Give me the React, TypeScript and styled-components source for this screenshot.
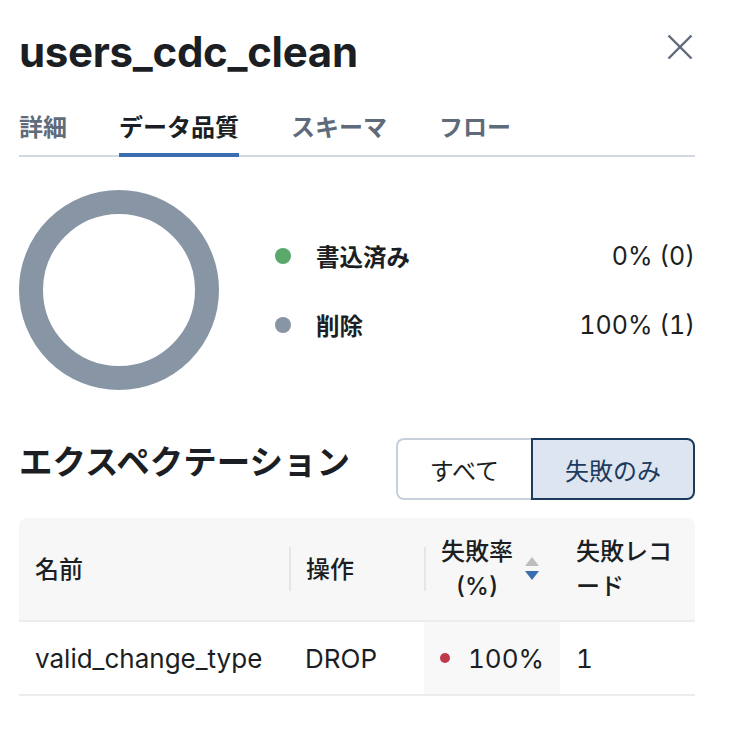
import React from "react";
import styled, { createGlobalStyle } from "styled-components";

const Global = createGlobalStyle`
  html, body { margin: 0; padding: 0; background: #ffffff; }
  body {
    font-family: Inter, "Noto Sans CJK JP", sans-serif;
    color: #1b1f24;
    font-variant-numeric: tabular-nums;
  }
  * { box-sizing: border-box; }
`;

const Panel = styled.div`
  width: 736px;
  padding: 24px 41px 40px 19px;
`;

const Header = styled.div`
  display: flex;
  justify-content: space-between;
  align-items: flex-start;
`;

const Title = styled.h1`
  margin: 0;
  font-size: 42px;
  line-height: 56px;
  font-weight: 700;
  letter-spacing: -0.3px;
`;

const CloseButton = styled.button`
  border: none;
  background: none;
  padding: 0;
  margin: 10px 2px 0 0;
  width: 26px;
  height: 26px;
  display: flex;
  color: #5f6b7a;
  cursor: pointer;
`;

const TabBar = styled.div`
  display: flex;
  gap: 52px;
  margin-top: 32px;
  border-bottom: 2px solid #d3d9e1;
`;

const Tab = styled.div<{ $active?: boolean }>`
  font-size: 24px;
  line-height: 32px;
  font-weight: 600;
  padding-bottom: 9px;
  margin-bottom: -2px;
  border-bottom: 4px solid ${(p) => (p.$active ? "#3a6eb0" : "transparent")};
  color: ${(p) => (p.$active ? "#1b1f24" : "#5f6b7a")};
`;

const ChartRow = styled.div`
  display: flex;
  align-items: center;
  margin-top: 33px;
`;

const Legend = styled.div`
  flex: 1;
  margin-left: 56px;
  display: flex;
  flex-direction: column;
  gap: 35px;
`;

const LegendRow = styled.div`
  display: flex;
  align-items: center;
  height: 34px;
`;

const Dot = styled.span<{ $color: string; $size: number }>`
  width: ${(p) => p.$size}px;
  height: ${(p) => p.$size}px;
  border-radius: 50%;
  background: ${(p) => p.$color};
  flex-shrink: 0;
`;

const LegendLabel = styled.span`
  margin-left: 25px;
  font-size: 23.5px;
  font-weight: 600;
`;

const LegendValue = styled.span`
  margin-left: auto;
  font-size: 25px;
  font-weight: 400;
`;

const SectionHeader = styled.div`
  display: flex;
  justify-content: space-between;
  align-items: center;
  margin-top: 48px;
`;

const SectionTitle = styled.h2`
  margin: 0 0 14px 0;
  font-size: 33.5px;
  line-height: 44px;
  font-weight: 700;
`;

const Segmented = styled.div`
  display: flex;
`;

const SegButton = styled.button<{ $selected?: boolean; $pos: "left" | "right" }>`
  height: 62px;
  padding: 0 32px;
  font-family: inherit;
  font-size: 24px;
  font-weight: 400;
  cursor: pointer;
  border: ${(p) => (p.$selected ? "2px solid #1c3a5e" : "2px solid #c8d1db")};
  ${(p) => (p.$pos === "left" ? "border-right: none;" : "")}
  background: ${(p) => (p.$selected ? "#dde5f0" : "#ffffff")};
  color: ${(p) => (p.$selected ? "#1c3a5e" : "#1b1f24")};
  border-radius: ${(p) => (p.$pos === "left" ? "8px 0 0 8px" : "0 8px 8px 0")};
`;

const Table = styled.table`
  margin-top: 18px;
  width: 100%;
  border-collapse: separate;
  border-spacing: 0;
  table-layout: fixed;
`;

const HeadCell = styled.th<{ $first?: boolean; $last?: boolean }>`
  background: #f7f7f7;
  padding: 16px 16px 16px ${(p) => (p.$first || p.$last ? "16px" : "0")};
  border-bottom: 2px solid #ececec;
  text-align: left;
  font-size: 24px;
  line-height: 35px;
  font-weight: 500;
  vertical-align: middle;
  ${(p) => (p.$first ? "border-top-left-radius: 8px;" : "")}
  ${(p) => (p.$last ? "border-top-right-radius: 8px;" : "")}
`;

const HeadInner = styled.div`
  display: flex;
  align-items: center;
`;

const Divider = styled.span`
  width: 2px;
  height: 44px;
  background: #e6e6e6;
  margin-right: 15px;
  flex-shrink: 0;
`;

const CenterLabel = styled.span`
  text-align: center;
`;

const SortIcon = styled.svg`
  margin-left: 12px;
  flex-shrink: 0;
`;

const Cell = styled.td<{ $shaded?: boolean }>`
  height: 74px;
  padding: 0 16px;
  border-bottom: 2px solid #ececec;
  font-size: 26px;
  vertical-align: middle;
  background: ${(p) => (p.$shaded ? "#f8f8f8" : "#ffffff")};
  white-space: nowrap;
`;

const RateInner = styled.div`
  display: flex;
  align-items: center;
  gap: 18px;
`;

export default function App() {
  return (
    <Panel>
      <Global />
      <Header>
        <Title>users_cdc_clean</Title>
        <CloseButton aria-label="close">
          <svg width="26" height="26" viewBox="0 0 26 26">
            <line x1="1.5" y1="1.5" x2="24.5" y2="24.5" stroke="currentColor" strokeWidth="2.4" />
            <line x1="24.5" y1="1.5" x2="1.5" y2="24.5" stroke="currentColor" strokeWidth="2.4" />
          </svg>
        </CloseButton>
      </Header>

      <TabBar>
        <Tab>詳細</Tab>
        <Tab $active>データ品質</Tab>
        <Tab>スキーマ</Tab>
        <Tab>フロー</Tab>
      </TabBar>

      <ChartRow>
        <svg width="200" height="200" viewBox="0 0 200 200">
          <circle cx="100" cy="100" r="88" fill="none" stroke="#8795a5" strokeWidth="24" />
        </svg>
        <Legend>
          <LegendRow>
            <Dot $color="#5aa86b" $size={16} />
            <LegendLabel>書込済み</LegendLabel>
            <LegendValue>0% (0)</LegendValue>
          </LegendRow>
          <LegendRow>
            <Dot $color="#8795a5" $size={16} />
            <LegendLabel>削除</LegendLabel>
            <LegendValue>100% (1)</LegendValue>
          </LegendRow>
        </Legend>
      </ChartRow>

      <SectionHeader>
        <SectionTitle>エクスペクテーション</SectionTitle>
        <Segmented>
          <SegButton $pos="left">すべて</SegButton>
          <SegButton $pos="right" $selected>
            失敗のみ
          </SegButton>
        </Segmented>
      </SectionHeader>

      <Table>
        <colgroup>
          <col style={{ width: 270 }} />
          <col style={{ width: 135 }} />
          <col style={{ width: 136 }} />
          <col style={{ width: 135 }} />
        </colgroup>
        <thead>
          <tr>
            <HeadCell $first>名前</HeadCell>
            <HeadCell>
              <HeadInner>
                <Divider />
                操作
              </HeadInner>
            </HeadCell>
            <HeadCell>
              <HeadInner>
                <Divider />
                <CenterLabel>
                  失敗率
                  <br />
                  (%)
                </CenterLabel>
                <SortIcon width="14" height="26" viewBox="0 0 14 26">
                  <polygon points="7,1 14,10 0,10" fill="#bdbdbd" />
                  <polygon points="0,15 14,15 7,24" fill="#3a6eb0" />
                </SortIcon>
              </HeadInner>
            </HeadCell>
            <HeadCell $last>失敗レコード</HeadCell>
          </tr>
        </thead>
        <tbody>
          <tr>
            <Cell>valid_change_type</Cell>
            <Cell>DROP</Cell>
            <Cell $shaded>
              <RateInner>
                <Dot $color="#c0394b" $size={10} />
                100%
              </RateInner>
            </Cell>
            <Cell>1</Cell>
          </tr>
        </tbody>
      </Table>
    </Panel>
  );
}
